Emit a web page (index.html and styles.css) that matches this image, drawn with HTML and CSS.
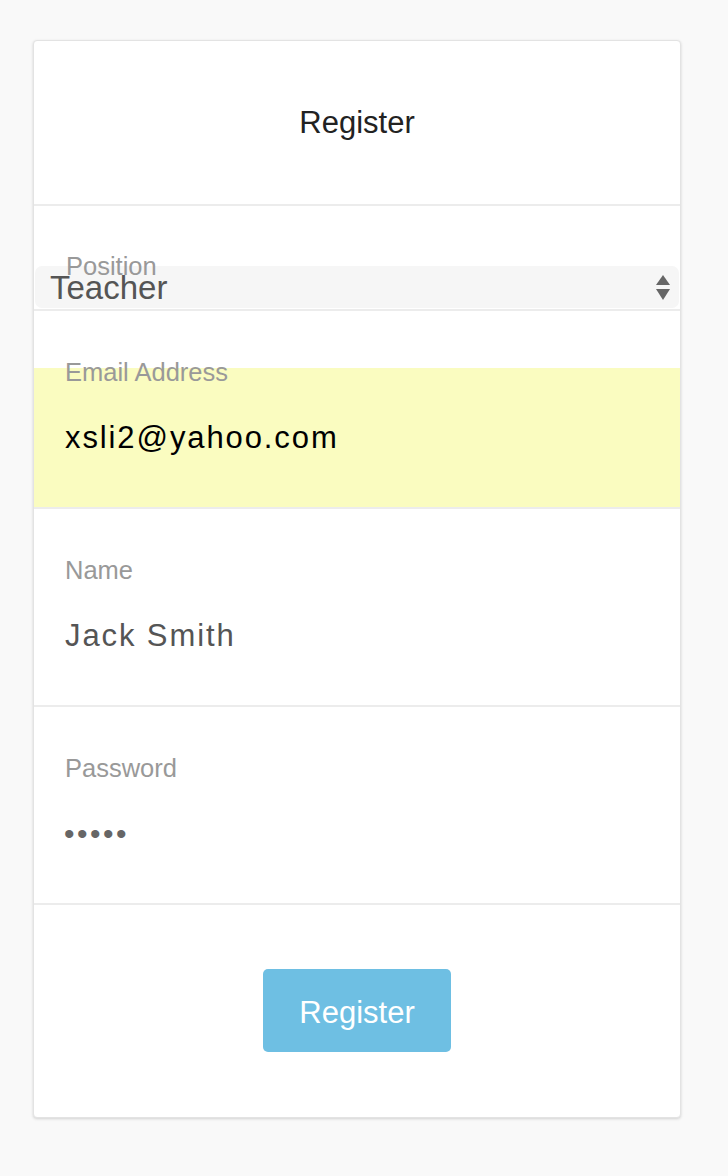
FILE: index.html
```html
<!DOCTYPE html>
<html>
<head>
<meta charset="utf-8">
<link rel="stylesheet" href="styles.css">
</head>
<body>
<div class="card">
  <div class="card-header">Register</div>
  <div class="section section-select">
    <div class="label">Position</div>
    <div class="select">
      <span class="select-value">Teacher</span>
      <svg class="select-arrows" width="16" height="28" viewBox="0 0 16 28">
        <path d="M8 1 L15 11 L1 11 Z" fill="#666"/>
        <path d="M1 15 L15 15 L8 26 Z" fill="#666"/>
      </svg>
    </div>
  </div>
  <div class="section">
    <div class="label">Email Address</div>
    <div class="input input-autofill">xsli2@yahoo.com</div>
  </div>
  <div class="section">
    <div class="label">Name</div>
    <div class="input">Jack Smith</div>
  </div>
  <div class="section">
    <div class="label">Password</div>
    <div class="input input-password">•••••</div>
  </div>
  <div class="actions">
    <button class="btn" type="button">Register</button>
  </div>
</div>
</body>
</html>
```

FILE: styles.css
```css
html, body {
  margin: 0;
  padding: 0;
}
body {
  background: #f9f9f9;
  font-family: "Liberation Sans", Arial, Helvetica, sans-serif;
  padding-top: 40px;
  padding-bottom: 56px;
}
.card {
  box-sizing: border-box;
  width: 648px;
  margin-left: 33px;
  background: #fff;
  border: 1px solid #e3e3e3;
  border-radius: 4px;
  box-shadow: 0 1px 3px rgba(0, 0, 0, 0.16);
}
.card-header {
  height: 163px;
  display: flex;
  align-items: center;
  justify-content: center;
  font-size: 31px;
  color: #222;
  border-bottom: 2px solid #ececec;
}
.section {
  border-bottom: 2px solid #ececec;
  padding-top: 46px;
  display: flex;
  flex-direction: column;
}
.section-select {
  padding-top: 45px;
  padding-bottom: 1px;
}
.label {
  position: relative;
  z-index: 1;
  padding-left: 31px;
  font-size: 25.5px;
  line-height: 30px;
  color: #999;
  height: 30px;
}
.section-select .label {
  padding-left: 32px;
}
.select {
  margin: -15px 1px 0 1px;
  height: 42px;
  background: #f6f6f6;
  border-radius: 7px;
  display: flex;
  align-items: center;
  justify-content: space-between;
  padding: 0 8px 0 15px;
}
.select-value {
  font-size: 33px;
  color: #555;
  line-height: 42px;
  margin-top: 2px;
}
.select-arrows {
  display: block;
  margin-top: 2px;
}
.input {
  margin-top: -19px;
  height: 139px;
  display: flex;
  align-items: center;
  padding-left: 31px;
  font-size: 31px;
  letter-spacing: 1.9px;
  color: #555;
}
.input-autofill {
  background: #fafcc0;
  color: #000;
}
.input-password {
  font-size: 30px;
  letter-spacing: 2.5px;
  color: #666;
  padding-left: 30px;
}
.actions {
  padding: 64px 0 65px;
  display: flex;
  justify-content: center;
}
.btn {
  width: 188px;
  height: 83px;
  border: 0;
  border-radius: 5px;
  background: #6ebfe3;
  color: #fff;
  font-family: "Liberation Sans", Arial, Helvetica, sans-serif;
  font-size: 31px;
  padding: 5px 0 0;
}
```
